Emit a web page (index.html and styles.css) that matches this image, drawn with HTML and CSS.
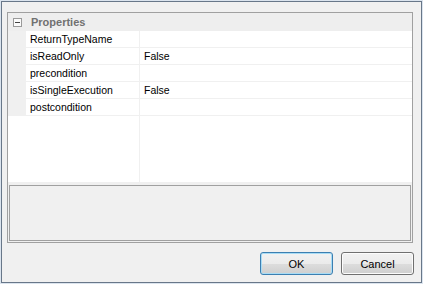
FILE: index.html
```html
<!DOCTYPE html>
<html lang="en">
<head>
  <meta charset="UTF-8">
  <title>Properties</title>
  <link rel="stylesheet" href="styles.css">
</head>
<body>
  <div class="dialog">
    <div class="property-grid">
      <div class="grid-area">
        <div class="category">
          <span class="toggle"></span>
          <span class="category-name">Properties</span>
        </div>
        <div class="row">
          <div class="gutter"></div>
          <div class="name">ReturnTypeName</div>
          <div class="value"></div>
        </div>
        <div class="row">
          <div class="gutter"></div>
          <div class="name">isReadOnly</div>
          <div class="value">False</div>
        </div>
        <div class="row">
          <div class="gutter"></div>
          <div class="name">precondition</div>
          <div class="value"></div>
        </div>
        <div class="row">
          <div class="gutter"></div>
          <div class="name">isSingleExecution</div>
          <div class="value">False</div>
        </div>
        <div class="row">
          <div class="gutter"></div>
          <div class="name">postcondition</div>
          <div class="value"></div>
        </div>
        <div class="row filler">
          <div class="gutter"></div>
          <div class="name"></div>
          <div class="value"></div>
        </div>
      </div>
      <div class="help-panel"></div>
    </div>
    <div class="footer">
      <button class="default">OK</button>
      <button>Cancel</button>
    </div>
  </div>
</body>
</html>
```

FILE: styles.css
```css
body {
  margin: 0;
  background-color: #dbe4ee;
  font-family: 'Liberation Sans', Arial, sans-serif;
}

.dialog {
  box-sizing: border-box;
  width: 421px;
  height: 282px;
  margin: 1px;
  border: 1px solid #687789;
  background-color: #f0f0f0;
  padding: 10px 7px 0 5px;
  display: flex;
  flex-direction: column;
}

.property-grid {
  height: 231px;
  box-sizing: border-box;
  margin-right: 1px;
  border: 1px solid #a0a0a0;
  display: flex;
  flex-direction: column;
}

.grid-area {
  height: 169px;
  background-color: #fff;
  display: flex;
  flex-direction: column;
}

.category {
  height: 18px;
  background-color: #eeeeee;
  display: flex;
  align-items: center;
  padding-left: 5px;
}

.toggle {
  width: 7px;
  height: 7px;
  border: 1px solid #9a9a9a;
  background-color: #fbfbfb;
  position: relative;
  margin-top: 1px;
}

.toggle::after {
  content: '';
  position: absolute;
  left: 1px;
  top: 3px;
  width: 5px;
  height: 1px;
  background-color: #444;
}

.category-name {
  margin-left: 9px;
  font-size: 11px;
  font-weight: bold;
  color: #717171;
}

.row {
  height: 16px;
  display: grid;
  grid-template-columns: 18px 114px 1fr;
  border-bottom: 1px solid #f0f0f0;
  font-size: 10.5px;
  color: #000;
}

.row .gutter {
  background-color: #f0f0f0;
}

.row .name {
  border-right: 1px solid #f0f0f0;
  padding-left: 4px;
  line-height: 16px;
  white-space: nowrap;
}

.row .value {
  padding-left: 4px;
  line-height: 16px;
}

.row.filler {
  flex: 1;
  border-bottom: none;
}

.row.filler .gutter {
  background-color: #fff;
}

.help-panel {
  height: 56px;
  box-sizing: border-box;
  margin: 3px 1px 1px 1px;
  border: 1px solid #a0a0a0;
  background-color: #f0f0f0;
}

.footer {
  display: flex;
  justify-content: flex-end;
  gap: 8px;
  margin-top: 9px;
}

button {
  width: 73px;
  height: 23px;
  border: 1px solid #707070;
  border-radius: 3px;
  background: linear-gradient(#f2f2f2 0%, #ebebeb 50%, #dddddd 51%, #cfcfcf 100%);
  box-shadow: inset 0 0 0 1px #fcfcfc;
  font-family: 'Liberation Sans', Arial, sans-serif;
  font-size: 11px;
  color: #000;
  padding: 0;
}

button.default {
  border-color: #3c7fb1;
  box-shadow: inset 0 0 0 1px #a8dcf5;
}
```
